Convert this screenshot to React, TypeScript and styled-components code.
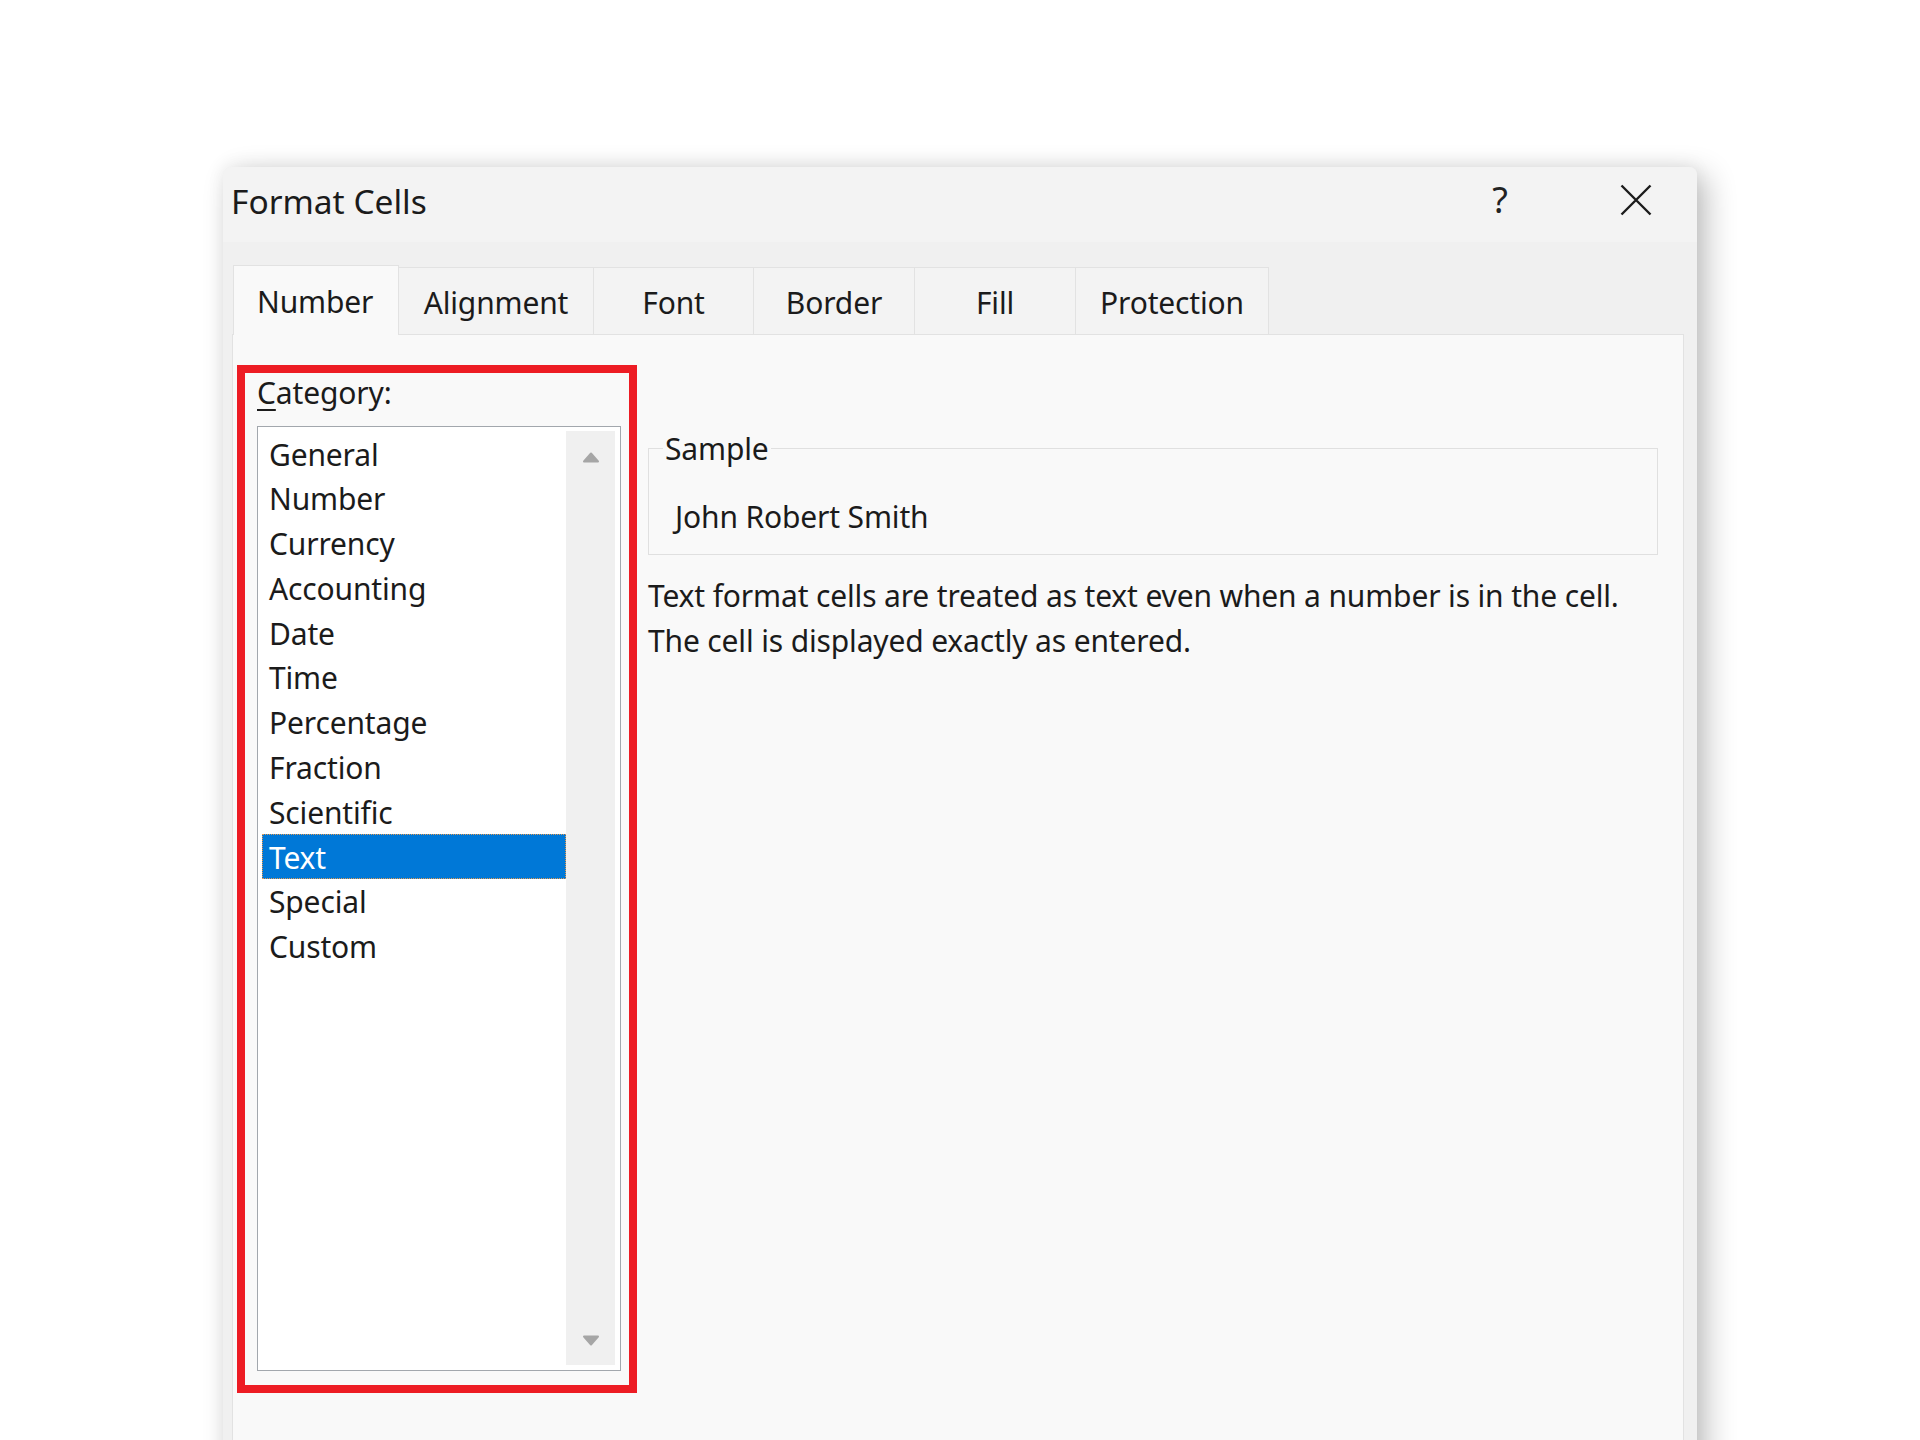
import React from 'react';
import styled, { createGlobalStyle } from 'styled-components';

const GlobalStyle = createGlobalStyle`
  html, body {
    margin: 0;
    padding: 0;
    background: #ffffff;
  }
  body {
    font-family: "Segoe UI", "Noto Sans", "Liberation Sans", sans-serif;
    color: #1b1b1b;
    overflow: hidden;
  }
`;

const Page = styled.div`
  width: 1920px;
  height: 1440px;
  overflow: hidden;
  padding: 167px 0 0 223px;
  box-sizing: border-box;
`;

const Dialog = styled.div`
  width: 1474px;
  height: 1320px;
  background: #f0f0f0;
  border-radius: 8px 8px 0 0;
  box-shadow: 0 -2px 18px rgba(0, 0, 0, 0.06), 10px 8px 30px rgba(0, 0, 0, 0.24);
  display: flex;
  flex-direction: column;
  overflow: hidden;
`;

const TitleBar = styled.div`
  height: 75px;
  flex: none;
  background: #f3f3f3;
  display: flex;
  align-items: center;
  padding-left: 8px;
`;

const Title = styled.div`
  flex: 1;
  font-size: 33.5px;
  line-height: 40px;
  margin-top: -7px;
  color: #1b1b1b;
`;

const HelpButton = styled.div`
  width: 60px;
  text-align: center;
  font-size: 36px;
  line-height: 40px;
  color: #222;
  margin-right: 76px;
  margin-top: -10px;
`;

const CloseButton = styled.div`
  width: 60px;
  height: 40px;
  display: flex;
  align-items: center;
  justify-content: center;
  margin-right: 31px;
  margin-top: -10px;
`;

const Body = styled.div`
  flex: 1;
  display: flex;
  flex-direction: column;
  padding: 23px 13px 0 9px;
`;

const TabRow = styled.div`
  display: flex;
  align-items: flex-end;
  height: 69px;
  padding-left: 1px;
`;

const Tab = styled.div<{ $w: number; $active?: boolean }>`
  position: relative;
  box-sizing: border-box;
  width: ${p => p.$w}px;
  height: ${p => (p.$active ? 70 : 67)}px;
  margin-bottom: ${p => (p.$active ? -1 : 0)}px;
  z-index: ${p => (p.$active ? 1 : 0)};
  background: ${p => (p.$active ? '#f9f9f9' : '#f3f3f3')};
  border: 1px solid #e2e2e2;
  border-bottom: none;
  border-left: ${p => (p.$active ? '1px solid #e2e2e2' : 'none')};
  display: flex;
  align-items: center;
  justify-content: ${p => (p.$active ? 'flex-start' : 'center')};
  padding-left: ${p => (p.$active ? 23 : 0)}px;
  padding-top: ${p => (p.$active ? 1 : 3)}px;
  font-size: 30px;
  letter-spacing: -0.15px;
  color: #1b1b1b;
`;

const Panel = styled.div`
  flex: 1;
  background: #f9f9f9;
  border: 1px solid #e2e2e2;
  padding: 30px 25px 0 4px;
  display: grid;
  grid-template-columns: 400px 1fr;
  column-gap: 11px;
  align-items: start;
`;

const Highlight = styled.div`
  box-sizing: border-box;
  height: 1028px;
  border: 8px solid #ed1c24;
  padding: 0 8px 0 12px;
  display: flex;
  flex-direction: column;
`;

const FieldLabel = styled.div`
  font-size: 30px;
  letter-spacing: -0.15px;
  line-height: 40px;
  height: 40px;
  color: #1b1b1b;

  u {
    text-decoration-thickness: 2px;
    text-underline-offset: 5px;
  }
`;

const ListBox = styled.div`
  box-sizing: border-box;
  margin-top: 13px;
  height: 945px;
  border: 1px solid #a2a7ad;
  background: #ffffff;
  padding: 4px 5px 5px 4px;
  display: grid;
  grid-template-columns: 1fr 49px;
`;

const Items = styled.div`
  display: flex;
  flex-direction: column;
`;

const Item = styled.div<{ $selected?: boolean }>`
  box-sizing: border-box;
  height: 44.8px;
  padding: 2.5px 0 0 7px;
  line-height: 42.3px;
  font-size: 30px;
  letter-spacing: -0.15px;
  white-space: nowrap;
  color: ${p => (p.$selected ? '#ffffff' : '#1b1b1b')};
  background: ${p => (p.$selected ? '#0078d7' : 'transparent')};
  outline: ${p => (p.$selected ? '1px dotted #e39a52' : 'none')};
  outline-offset: -1px;
`;

const ScrollBar = styled.div`
  background: #f0f0f0;
  display: flex;
  flex-direction: column;
  justify-content: space-between;
  align-items: center;
  padding: 21px 0 19px;
`;

const RightColumn = styled.div`
  margin-top: 63.5px;
  display: flex;
  flex-direction: column;
`;

const SampleBox = styled.fieldset`
  margin: 0;
  border: 1px solid #e0e0e0;
  padding: 25px 0 15px 26px;
  min-width: 0;
`;

const SampleLegend = styled.legend`
  font-size: 30px;
  letter-spacing: -0.15px;
  line-height: 40px;
  padding: 0 2px;
  margin-left: -12px;
  color: #1b1b1b;
`;

const SampleValue = styled.div`
  font-size: 30px;
  letter-spacing: -0.15px;
  line-height: 45px;
  color: #1b1b1b;
`;

const Description = styled.p`
  margin: 18px 0 0;
  font-size: 30px;
  letter-spacing: -0.15px;
  line-height: 45px;
  color: #1b1b1b;
  white-space: nowrap;
`;

const Arrow: React.FC<{ down?: boolean }> = ({ down }) => (
  <svg width="18" height="11" viewBox="0 0 18 11">
    <path
      d={down ? 'M2 1.5 H16 L9 9.5 Z' : 'M2 9.5 H16 L9 1.5 Z'}
      fill="#a6a6a6"
      stroke="#a6a6a6"
      strokeWidth="2"
      strokeLinejoin="round"
    />
  </svg>
);

const CloseIcon = () => (
  <svg width="32" height="32" viewBox="0 0 32 32">
    <path d="M1.5 1.5 L30.5 30.5 M30.5 1.5 L1.5 30.5" stroke="#1b1b1b" strokeWidth="2.4" fill="none" />
  </svg>
);

const tabs = [
  { label: 'Number', w: 166 },
  { label: 'Alignment', w: 195 },
  { label: 'Font', w: 160 },
  { label: 'Border', w: 161 },
  { label: 'Fill', w: 161 },
  { label: 'Protection', w: 193 },
];

const categories = [
  'General',
  'Number',
  'Currency',
  'Accounting',
  'Date',
  'Time',
  'Percentage',
  'Fraction',
  'Scientific',
  'Text',
  'Special',
  'Custom',
];

const App: React.FC = () => {
  return (
    <>
      <GlobalStyle />
      <Page>
        <Dialog>
          <TitleBar>
            <Title>Format Cells</Title>
            <HelpButton>?</HelpButton>
            <CloseButton>
              <CloseIcon />
            </CloseButton>
          </TitleBar>
          <Body>
            <TabRow>
              {tabs.map((t, i) => (
                <Tab key={t.label} $w={t.w} $active={i === 0}>
                  {t.label}
                </Tab>
              ))}
            </TabRow>
            <Panel>
              <Highlight>
                <FieldLabel>
                  <u>C</u>ategory:
                </FieldLabel>
                <ListBox>
                  <Items>
                    {categories.map(c => (
                      <Item key={c} $selected={c === 'Text'}>
                        {c}
                      </Item>
                    ))}
                  </Items>
                  <ScrollBar>
                    <Arrow />
                    <Arrow down />
                  </ScrollBar>
                </ListBox>
              </Highlight>
              <RightColumn>
                <SampleBox>
                  <SampleLegend>Sample</SampleLegend>
                  <SampleValue>John Robert Smith</SampleValue>
                </SampleBox>
                <Description>
                  Text format cells are treated as text even when a number is in the cell.
                  <br />
                  The cell is displayed exactly as entered.
                </Description>
              </RightColumn>
            </Panel>
          </Body>
        </Dialog>
      </Page>
    </>
  );
};

export default App;
